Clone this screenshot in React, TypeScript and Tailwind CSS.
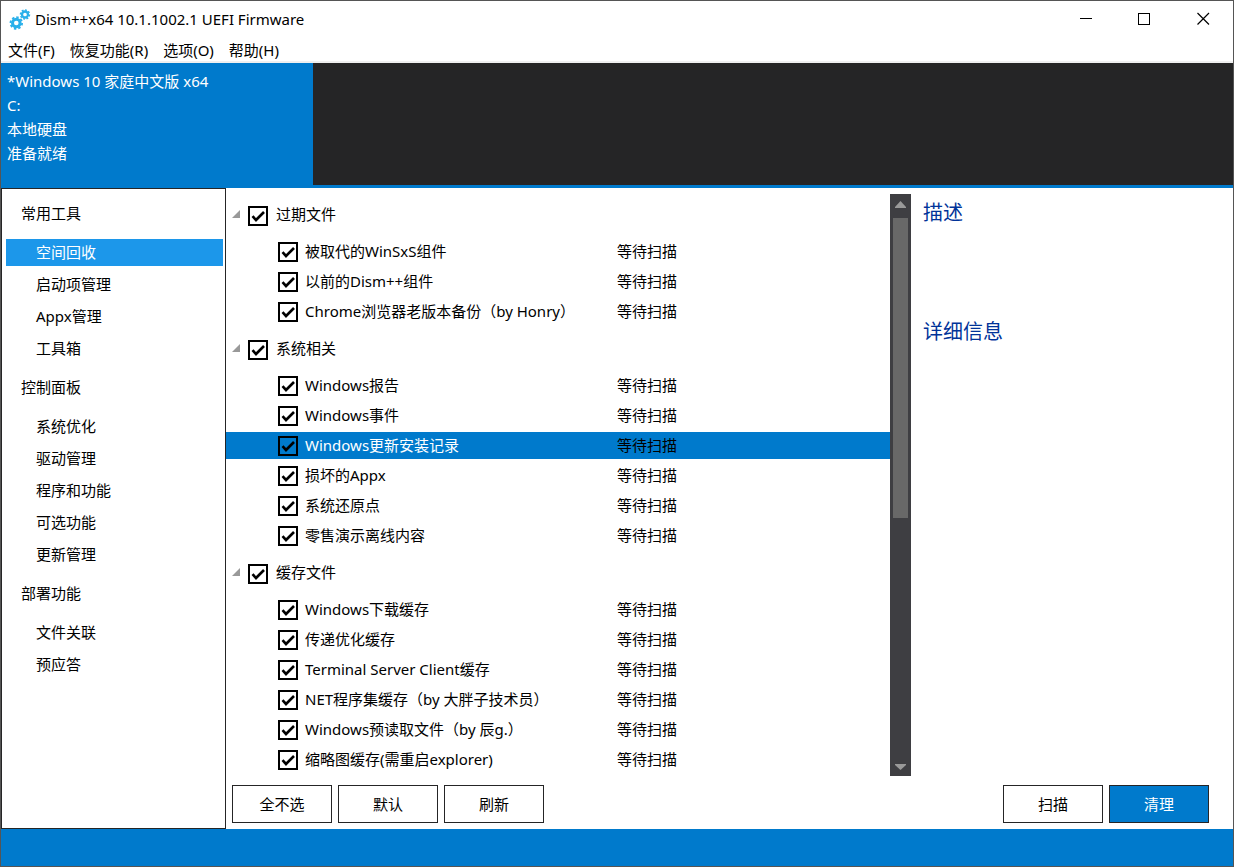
import { useState } from 'react'

type Group = { name: string; items: string[] }

const menus = ['文件(F)', '恢复功能(R)', '选项(O)', '帮助(H)']

const sections: Group[] = [
  { name: '常用工具', items: ['空间回收', '启动项管理', 'Appx管理', '工具箱'] },
  { name: '控制面板', items: ['系统优化', '驱动管理', '程序和功能', '可选功能', '更新管理'] },
  { name: '部署功能', items: ['文件关联', '预应答'] },
]

const groups: Group[] = [
  { name: '过期文件', items: ['被取代的WinSxS组件', '以前的Dism++组件', 'Chrome浏览器老版本备份（by Honry）'] },
  {
    name: '系统相关',
    items: ['Windows报告', 'Windows事件', 'Windows更新安装记录', '损坏的Appx', '系统还原点', '零售演示离线内容'],
  },
  {
    name: '缓存文件',
    items: [
      'Windows下载缓存',
      '传递优化缓存',
      'Terminal Server Client缓存',
      'NET程序集缓存（by 大胖子技术员）',
      'Windows预读取文件（by 辰g.）',
      '缩略图缓存(需重启explorer)',
    ],
  },
]

const allNames = groups.flatMap((g) => g.items)

export default function App() {
  const [page, setPage] = useState('空间回收')
  const [selected, setSelected] = useState('Windows更新安装记录')
  const [checked, setChecked] = useState<string[]>(allNames)

  const toggle = (names: string[], on: boolean) => {
    const rest = checked.filter((n) => !names.includes(n))
    setChecked(on ? [...rest, ...names] : rest)
  }

  return (
    <div className="flex min-h-screen flex-col border border-[#555555] bg-white font-['Noto_Sans','Noto_Sans_CJK_SC',sans-serif] text-[15px] leading-6 text-black">
      <TitleBar />

      <nav className="flex h-[23px] items-center gap-[15px] pl-[7px]">
        {menus.map((m) => (
          <button key={m} type="button">{m}</button>
        ))}
      </nav>

      <header className="flex h-[127px] shrink-0 border-t-2 border-b-3 border-t-[#f0f0f0] border-b-[#007acc] bg-[#252526]">
        <button type="button" className="flex w-[312px] flex-col items-start bg-[#007acc] px-1.5 pt-1.5 text-left text-white">
          <span>*Windows 10 家庭中文版 x64</span>
          <span>C:</span>
          <span>本地硬盘</span>
          <span>准备就绪</span>
        </button>
      </header>

      <div className="flex flex-1">
        <aside className="w-[225px] shrink-0 border border-[#252526] pt-px pr-0.5 pl-1">
          {sections.map((s) => (
            <section key={s.name}>
              <h2 className="flex h-[46px] items-center pl-[15px]">{s.name}</h2>
              <ul>
                {s.items.map((item) => (
                  <li key={item} className="pt-[3px] pb-0.5">
                    <button
                      type="button"
                      onClick={() => setPage(item)}
                      className={`flex h-[27px] w-full items-center pb-0.5 pl-[30px] ${page === item ? 'bg-[#1c97ea] text-white' : ''}`}
                    >
                      {item}
                    </button>
                  </li>
                ))}
              </ul>
            </section>
          ))}
        </aside>

        <main className="flex flex-1 flex-col">
          <div className="flex flex-1">
            <div className="min-w-0 flex-[664] pt-1">
              {groups.map((g) => (
                <section key={g.name}>
                  <div className="flex h-11 items-center pl-1.5">
                    <button type="button" aria-label={g.name} className="mr-2 w-2">
                      <svg viewBox="0 0 8 8" className="h-2 w-2" fill="#999999">
                        <path d="M8 0V8H0Z" />
                      </svg>
                    </button>
                    <label className="flex items-center gap-2">
                      <CheckBox
                        checked={g.items.every((n) => checked.includes(n))}
                        onChange={(on) => toggle(g.items, on)}
                      />
                      {g.name}
                    </label>
                  </div>
                  <ul>
                    {g.items.map((name) => (
                      <li key={name} className="pt-0.5 pb-px">
                        <div
                          onClick={() => setSelected(name)}
                          className={`grid h-[27px] grid-cols-[391px_1fr] items-center pb-0.5 ${selected === name ? 'bg-[#007acc]' : ''}`}
                        >
                          <label className="flex items-center gap-[7px] pl-[52px]">
                            <CheckBox checked={checked.includes(name)} onChange={(on) => toggle([name], on)} />
                            <span className={selected === name ? 'text-white' : ''}>{name}</span>
                          </label>
                          <span>等待扫描</span>
                        </div>
                      </li>
                    ))}
                  </ul>
                </section>
              ))}
            </div>

            <ScrollBar />

            <div className="flex-[310] pt-[9px] pl-3 text-xl leading-8 text-[#003399]">
              <h2 className="h-[119px]">描述</h2>
              <h2>详细信息</h2>
            </div>
          </div>

          <div className="flex gap-1.5 pt-[9px] pr-6 pb-1.5 pl-1.5">
            <Button onClick={() => setChecked([])}>全不选</Button>
            <Button onClick={() => setChecked(allNames)}>默认</Button>
            <Button>刷新</Button>
            <div className="flex-1" />
            <Button>扫描</Button>
            <Button primary>清理</Button>
          </div>
        </main>
      </div>

      <footer className="h-[37px] bg-[#007acc]" />
    </div>
  )
}

const TitleBar = () => {
  return (
    <div className="flex h-[37px] items-center pl-2">
      <Gears />
      <h1 className="ml-1 flex-1 pb-0.5">Dism++x64 10.1.1002.1 UEFI Firmware</h1>
      <div className="flex pb-0.5">
        <button type="button" aria-label="最小化" className="flex w-[58px] justify-center">
          <svg viewBox="0 0 13 13" className="h-[13px] w-[13px]" stroke="#000" shapeRendering="crispEdges">
            <path d="M0 6.5H12" />
          </svg>
        </button>
        <button type="button" aria-label="最大化" className="flex w-[58px] justify-center">
          <svg viewBox="0 0 13 13" className="h-[13px] w-[13px]" stroke="#000" fill="none" shapeRendering="crispEdges">
            <path d="M.5 1.5H11.5V12.5H.5Z" />
          </svg>
        </button>
        <button type="button" aria-label="关闭" className="flex w-[60px] justify-center">
          <svg viewBox="0 0 13 13" className="h-[13px] w-[13px]" stroke="#000" strokeWidth="1.2">
            <path d="M.5 1L12 12.5M12 1L.5 12.5" />
          </svg>
        </button>
      </div>
    </div>
  )
}

const Gears = () => {
  return (
    <svg viewBox="0 0 22 22" className="h-[22px] w-[22px]" fill="none" stroke="#29b0ea">
      <circle cx="7.3" cy="14" r="3.8" strokeWidth="3" />
      <circle cx="7.3" cy="14" r="5.8" strokeWidth="1.8" pathLength="16" strokeDasharray="1.1 .9" />
      <circle cx="16" cy="5.5" r="3" strokeWidth="2.3" />
      <circle cx="16" cy="5.5" r="4.5" strokeWidth="1.5" pathLength="16" strokeDasharray="1.1 .9" />
    </svg>
  )
}

const CheckBox = ({ checked, onChange }: { checked: boolean; onChange: (on: boolean) => void }) => {
  return (
    <span className="relative mt-[3px] h-5 w-5 shrink-0">
      <input
        type="checkbox"
        checked={checked}
        onChange={(e) => onChange(e.target.checked)}
        className="peer block h-5 w-5 appearance-none border-2 border-black"
      />
      <svg
        viewBox="0 0 20 20"
        className="pointer-events-none absolute inset-0 hidden h-5 w-5 peer-checked:block"
        fill="none"
        stroke="#000"
        strokeWidth="2.6"
      >
        <path d="M4.5 10.2L8 14L16 6" />
      </svg>
    </span>
  )
}

const ScrollBar = () => {
  return (
    <div className="mt-1.5 flex w-[21px] shrink-0 flex-col bg-[#3e3e42]">
      <button type="button" aria-label="向上" className="flex h-6 justify-center pt-[7px]">
        <svg viewBox="0 0 11 7" className="h-[7px] w-[11px]" fill="#999999">
          <path d="M5.5 0L11 6V7H0V6Z" />
        </svg>
      </button>
      <div className="flex-1">
        <div className="mx-[3px] h-[300px] bg-[#686868]" />
      </div>
      <button type="button" aria-label="向下" className="flex h-5 justify-center pt-2">
        <svg viewBox="0 0 11 6" className="h-1.5 w-[11px]" fill="#999999">
          <path d="M0 0H11V1L5.5 6L0 1Z" />
        </svg>
      </button>
    </div>
  )
}

type ButtonProps = { children: string; primary?: boolean; onClick?: () => void }

const Button = ({ children, primary, onClick }: ButtonProps) => {
  return (
    <button
      type="button"
      onClick={onClick}
      className={`h-[38px] w-[100px] border border-[#252526] ${primary ? 'bg-[#007acc] text-white' : 'bg-white'}`}
    >
      {children}
    </button>
  )
}
